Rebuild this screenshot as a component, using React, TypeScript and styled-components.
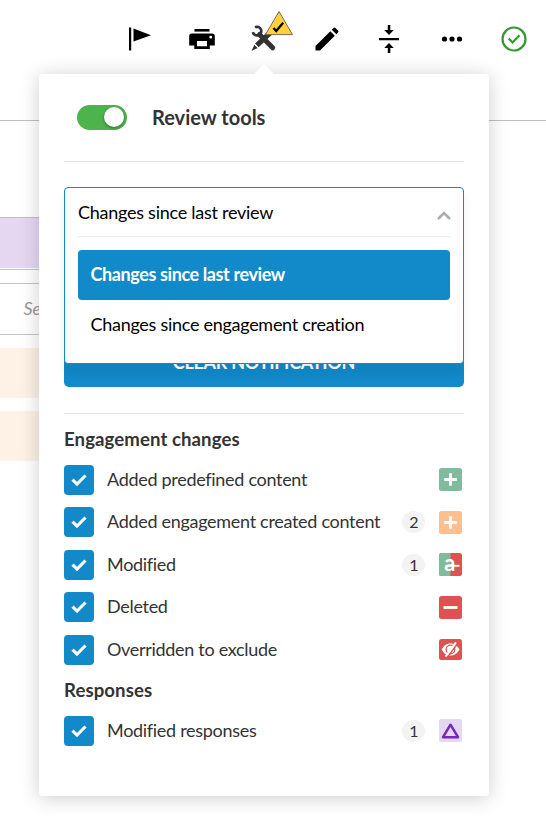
import React from "react";
import styled, { createGlobalStyle } from "styled-components";

const BLUE = "#1289c8";

const GlobalStyle = createGlobalStyle`
  * { box-sizing: border-box; }
  html, body { margin: 0; padding: 0; background: #fff; }
  body { font-family: Lato, sans-serif; font-size: 18px; color: #333; overflow: hidden; }
`;

const Page = styled.div`
  position: relative;
  width: 546px;
  height: 820px;
  overflow: hidden;
`;

const Toolbar = styled.header`
  height: 121px;
  border-bottom: 1px solid #bfbfbf;
  display: flex;
  align-items: flex-start;
  padding: 9px 0 0 109px;
`;

const ToolButton = styled.button<{ $width?: number }>`
  flex: none;
  width: ${(p) => p.$width ?? 62}px;
  height: 60px;
  padding: 0;
  border: 0;
  background: none;
  display: flex;
  align-items: center;
  justify-content: center;
  svg { display: block; overflow: visible; }
`;

const Underlay = styled.main`
  display: flex;
  flex-direction: column;
  padding-top: 96px;
`;

const Band = styled.div<{ $color: string; $height: number; $gap: number }>`
  width: 60px;
  height: ${(p) => p.$height}px;
  margin-bottom: ${(p) => p.$gap}px;
  background: ${(p) => p.$color};
`;

const PurpleBand = styled(Band)`
  border-top: 1px solid #c4bccb;
`;

const SearchBox = styled.div`
  width: 60px;
  height: 52px;
  margin: 13px 0;
  border-top: 1px solid #c4c4c4;
  border-bottom: 1px solid #c4c4c4;
  padding-left: 23.5px;
  line-height: 49px;
  font-style: italic;
  color: #999;
`;

const ThinLine = styled.div`
  height: 1px;
  margin-top: 1px;
  width: 60px;
  background: #c4c4c4;
`;

const Panel = styled.section`
  position: absolute;
  left: 39px;
  top: 74px;
  width: 450px;
  height: 722px;
  padding: 0 25px;
  border-radius: 4px;
  background: #fff;
  box-shadow: 0 2px 20px rgba(0, 0, 0, 0.2);
  &::before {
    content: "";
    position: absolute;
    left: 215px;
    top: -10px;
    border: 10px solid transparent;
    border-top: 0;
    border-bottom-color: #fff;
  }
`;

const PanelHeader = styled.div`
  display: flex;
  align-items: center;
  gap: 25px;
  height: 88px;
  padding-left: 13px;
  border-bottom: 1px solid #e3e3e3;
`;

const Switch = styled.div`
  width: 50px;
  height: 25px;
  padding: 2px;
  border-radius: 13px;
  background: #4db34d;
  display: flex;
  justify-content: flex-end;
`;

const Knob = styled.div`
  width: 20px;
  height: 20px;
  margin: 0 1px 0 0;
  border-radius: 50%;
  background: #fff;
  box-shadow: 0 1px 3px rgba(0, 0, 0, 0.4);
`;

const Title = styled.h1`
  margin: 0 0 2px;
  font-size: 20px;
  font-weight: 700;
  line-height: 26px;
`;

const Actions = styled.div`
  position: relative;
  height: 252px;
  padding-top: 175px;
  border-bottom: 1px solid #e3e3e3;
`;

const ClearButton = styled.button`
  display: block;
  width: 100%;
  height: 50px;
  padding: 0;
  border: 0;
  border-radius: 5px;
  background: ${BLUE};
  color: #fff;
  font: 700 18px/48px Lato, sans-serif;
  letter-spacing: -0.28px;
  text-transform: uppercase;
`;

const Select = styled.div`
  position: absolute;
  left: 0;
  top: 25px;
  width: 400px;
  height: 177px;
  padding: 0 13px;
  border: 1px solid ${BLUE};
  border-radius: 4px;
  background: #fff;
  color: #000;
  letter-spacing: -0.26px;
  box-shadow: 0 8px 12px rgba(0, 0, 0, 0.06);
`;

const SelectValue = styled.div`
  display: flex;
  align-items: center;
  justify-content: space-between;
  height: 49px;
  border-bottom: 1px solid #ebebeb;
  margin-bottom: 13px;
  svg { margin-top: 6px; margin-right: -1px; }
`;

const Option = styled.div<{ $active?: boolean }>`
  height: 50px;
  padding-left: 12.5px;
  line-height: ${(p) => (p.$active ? 49 : 48)}px;
  border-radius: 4px;
  background: ${(p) => (p.$active ? BLUE : "transparent")};
  color: ${(p) => (p.$active ? "#fff" : "#000")};
  font-weight: ${(p) => (p.$active ? 700 : 400)};
  letter-spacing: ${(p) => (p.$active ? -0.39 : -0.28)}px;
`;

const GroupTitle = styled.h2`
  margin: 0;
  height: 51px;
  line-height: 50px;
  font-size: 18.6px;
  font-weight: 700;
  letter-spacing: 0.08px;
`;

const Group = styled.div`
  display: flex;
  flex-direction: column;
  gap: 12.4px;
`;

const Row = styled.label`
  display: flex;
  align-items: center;
  height: 30px;
  padding-right: 1.6px;
`;

const Checkbox = styled.span`
  width: 30px;
  height: 30px;
  margin-right: 13px;
  border-radius: 4px;
  background: ${BLUE};
  display: grid;
  place-items: center;
`;

const RowText = styled.span`
  flex: 1;
  white-space: nowrap;
  line-height: 28px;
  margin-bottom: 2px;
  letter-spacing: -0.3px;
`;

const Count = styled.span`
  width: 23px;
  height: 22px;
  margin-right: 14px;
  border-radius: 50%;
  background: #f3f3f3;
  text-align: center;
  font-size: 16px;
  line-height: 22px;
`;

const Marker = styled.svg`
  display: block;
  width: 23px;
  height: 23px;
  margin-bottom: 0.2px;
  overflow: visible;
`;

type Kind = "added" | "created" | "modified" | "deleted" | "excluded" | "response";

const fills: Record<Kind, string> = {
  added: "#80bb9d",
  created: "#fdbf8d",
  modified: "#de5252",
  deleted: "#de5252",
  excluded: "#de5252",
  response: "#e5d7f2",
};

const MarkerText = styled.text`
  font: 700 22px Lato, sans-serif;
  fill: #fff;
`;

function ChangeMarker({ kind }: { kind: Kind }) {
  const short = kind === "excluded";
  return (
    <Marker viewBox="0 0 23 23">
      <rect y={short ? 1 : 0} width="23" height={short ? 21 : 23} rx="2.5" fill={fills[kind]} />
      {(kind === "added" || kind === "created") && (
        <path d="M11.5 5.2v12.6M5.2 11.5h12.6" stroke="#fff" strokeWidth="2.8" />
      )}
      {kind === "deleted" && <path d="M4.5 11.5h14" stroke="#fff" strokeWidth="2.8" />}
      {kind === "modified" && (
        <>
          <path d="M2.5 0h9v23h-9A2.5 2.5 0 0 1 0 20.5V2.5A2.5 2.5 0 0 1 2.5 0z" fill="#80bb9d" />
          <MarkerText x="5.2" y="17.6">a</MarkerText>
          <path d="M6.5 12.8h14" stroke="#fff" strokeWidth="2" />
        </>
      )}
      {kind === "excluded" && (
        <>
          <path d="M2.7 11.5C5 7 8.2 5.5 11.5 5.5S18 7 20.5 11.5C18 16 14.8 17.5 11.5 17.5S5 16 2.7 11.5z" fill="#fff" />
          <circle cx="11.5" cy="11.5" r="4.3" fill="none" stroke="#de5252" strokeWidth="1.2" />
          <path d="M8.2 19.4 18.7 5.5" stroke="#de5252" strokeWidth="1.5" />
          <path d="M6.5 18.6 17 4.4" stroke="#fff" strokeWidth="1.9" />
        </>
      )}
      {kind === "response" && (
        <path d="M11.5 5.7 19 18.2H4z" fill="none" stroke="#7329bd" strokeWidth="2.5" strokeLinejoin="round" />
      )}
    </Marker>
  );
}

function ChangeRow({ label, count, kind }: { label: string; count?: number; kind: Kind }) {
  return (
    <Row>
      <Checkbox>
        <svg width="16" height="14" viewBox="0 0 16 14">
          <path d="M1.5 6.6 6 11 14.5 2.5" fill="none" stroke="#fff" strokeWidth="3.1" />
        </svg>
      </Checkbox>
      <RowText>{label}</RowText>
      {count !== undefined && <Count>{count}</Count>}
      <ChangeMarker kind={kind} />
    </Row>
  );
}

const changes: { label: string; count?: number; kind: Kind }[] = [
  { label: "Added predefined content", kind: "added" },
  { label: "Added engagement created content", count: 2, kind: "created" },
  { label: "Modified", count: 1, kind: "modified" },
  { label: "Deleted", kind: "deleted" },
  { label: "Overridden to exclude", kind: "excluded" },
];

export default function App() {
  return (
    <>
      <GlobalStyle />
      <Page>
        <Toolbar>
          <ToolButton aria-label="Flag">
            <svg width="24" height="24" viewBox="0 0 24 24">
              <path d="M1 .5h2.2v23H1zM5.5 1.500 23 8.300 5.500 14.500z" />
            </svg>
          </ToolButton>
          <ToolButton aria-label="Print">
            <svg width="26" height="22" viewBox="0 0 26 22">
              <path d="M5.5 1h15v2.600h-15z" />
              <path fillRule="evenodd" d="M3 5.600h20a2.800 2.800 0 0 1 2.800 2.800v9.200h-5V21H5.300v-3.400H.2V8.400A2.800 2.800 0 0 1 3 5.600zm5 7.400v5.200h10V13zm13.700-5.200a1.400 1.400 0 1 0 0 2.800 1.400 1.400 0 0 0 0-2.800z" />
            </svg>
          </ToolButton>
          <ToolButton $width={63} aria-label="Review tools">
            <svg width="63" height="60" viewBox="233 9 63 60">
              <path d="M259.500 34.500 272.700 47.800" stroke="#333" strokeWidth="5" strokeLinecap="round" />
              <path d="M255 27.300A4.300 4.300 0 1 1 252.800 32.200" fill="none" stroke="#333" strokeWidth="2.700" />
              <path d="M256.800 45.300 271.500 31.500" stroke="#333" strokeWidth="5.200" />
              <path d="m254.300 44.800 3.400 3.300-6.200 2.800z" fill="#333" />
              <path d="m254 43.300 5.200 5.200" stroke="#fff" strokeWidth=".9" />
              <path d="M279 11.500 292.500 34.600h-27z" fill="#ffd23c" stroke="#756c50" strokeWidth="1" />
              <path d="m273.500 28 2.700 3 7-8.200" fill="none" stroke="#000" strokeWidth="2.300" />
            </svg>
          </ToolButton>
          <ToolButton aria-label="Edit">
            <svg width="24" height="24" viewBox="0 0 24 24">
              <path d="M.5 19 15.300 4.200l4.500 4.500L5 23.500H.5zM16.800 2.700 18.500 1q1-1 2 0l2.500 2.500q1 1 0 2l-1.700 1.700z" />
            </svg>
          </ToolButton>
          <ToolButton aria-label="Collapse">
            <svg width="20" height="28" viewBox="0 0 20 28">
              <path d="M0 12.900h20v2.400H0zM8.800 0h2.500v5h3.500L10 10.100 5.200 5h3.600zM8.800 28h2.500v-5h3.500L10 17.900 5.200 23h3.600z" />
            </svg>
          </ToolButton>
          <ToolButton $width={64} aria-label="More">
            <svg width="20" height="6" viewBox="0 0 20 6">
              <circle cx="2.500" cy="3" r="2.600" />
              <circle cx="10" cy="3" r="2.600" />
              <circle cx="17.500" cy="3" r="2.600" />
            </svg>
          </ToolButton>
          <ToolButton $width={60} aria-label="Complete">
            <svg width="26" height="26" viewBox="0 0 26 26" fill="none" stroke="#309b30" strokeWidth="2.200">
              <circle cx="13" cy="13" r="11.500" />
              <path d="m7.700 12.500 3.800 4 7-7.300" />
            </svg>
          </ToolButton>
        </Toolbar>

        <Underlay>
          <PurpleBand $color="#e5d7f2" $height={51} $gap={0} />
          <ThinLine />
          <SearchBox>Search</SearchBox>
          <Band $color="#fdf2e5" $height={50} $gap={13} />
          <Band $color="#fdf2e5" $height={50} $gap={0} />
        </Underlay>

        <Panel>
          <PanelHeader>
            <Switch><Knob /></Switch>
            <Title>Review tools</Title>
          </PanelHeader>
          <Actions>
            <ClearButton>Clear notification</ClearButton>
            <Select>
              <SelectValue>
                Changes since last review
                <svg width="14" height="9" viewBox="0 0 14 9">
                  <path d="m1 8 6-6 6 6" fill="none" stroke="#adadad" strokeWidth="2.500" />
                </svg>
              </SelectValue>
              <Option $active>Changes since last review</Option>
              <Option>Changes since engagement creation</Option>
            </Select>
          </Actions>
          <GroupTitle>Engagement changes</GroupTitle>
          <Group>
            {changes.map((c) => <ChangeRow key={c.label} {...c} />)}
          </Group>
          <GroupTitle>Responses</GroupTitle>
          <Group>
            <ChangeRow label="Modified responses" count={1} kind="response" />
          </Group>
        </Panel>
      </Page>
    </>
  );
}
